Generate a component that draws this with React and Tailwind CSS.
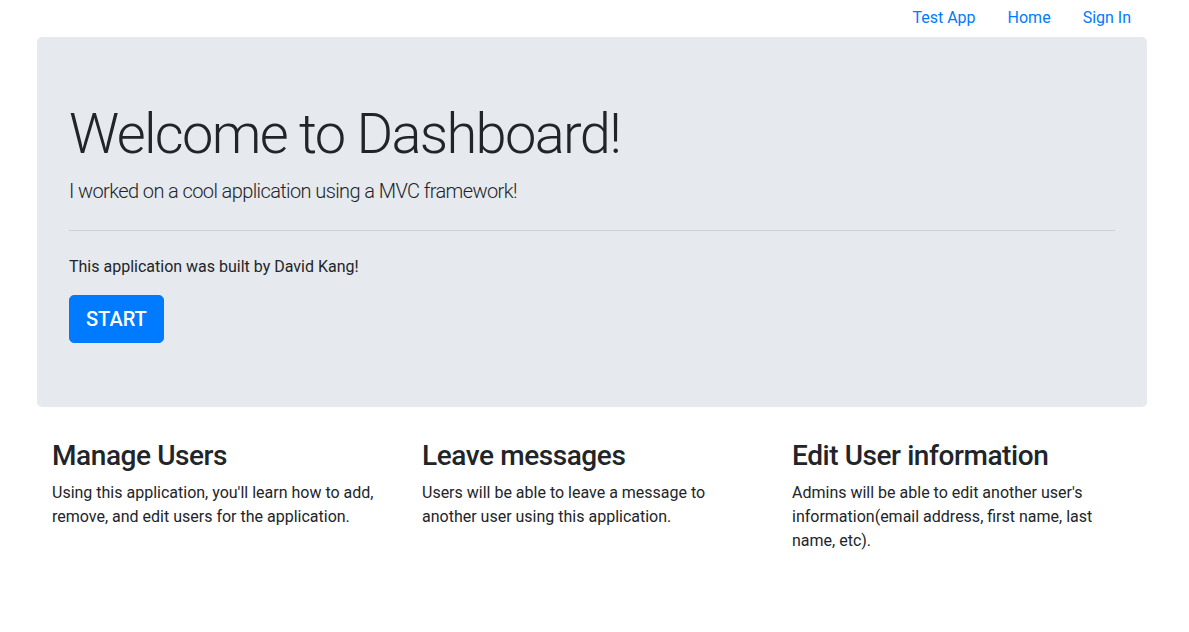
export default function App() {
  const features = [
    {
      title: "Manage Users",
      body: "Using this application, you'll learn how to add, remove, and edit users for the application.",
    },
    {
      title: "Leave messages",
      body: "Users will be able to leave a message to another user using this application.",
    },
    {
      title: "Edit User information",
      body: "Admins will be able to edit another user's information(email address, first name, last name, etc).",
    },
  ];

  return (
    <div className="min-h-screen bg-white text-[#212529] font-['Roboto','Liberation_Sans',sans-serif] text-base leading-6">
      {/* ── Nav ── */}
      <nav className="w-[1110px] ml-[37px] h-[37px] pt-[6px] flex justify-end">
        {["Test App", "Home", "Sign In"].map((l) => (
          <a key={l} href="#" className="px-4 text-[#007bff] leading-6">
            {l}
          </a>
        ))}
      </nav>

      {/* ── Jumbotron ── */}
      <div className="w-[1110px] ml-[37px] bg-[#e6e9ed] rounded-[5px] px-8 py-16 mb-8">
        <h1 className="text-[56px] font-light leading-[1.2] mb-2 tracking-[-0.03em]">
          Welcome to Dashboard!
        </h1>
        <p className="text-xl font-light leading-[30px] tracking-[-0.03em]">
          I worked on a cool application using a MVC framework!
        </p>
        <hr className="my-6 border-0 border-t border-black/10" />
        <p className="mb-4">This application was built by David Kang!</p>
        <button className="bg-[#007bff] border border-[#007bff] text-white text-xl font-medium leading-[30px] px-4 py-2 rounded-[5px]">
          START
        </button>
      </div>

      {/* ── Features ── */}
      <div className="w-[1110px] ml-[37px] grid grid-cols-3">
        {features.map((f) => (
          <div key={f.title} className="px-[15px]">
            <h3 className="text-[28px] font-medium leading-[1.2] mb-2 tracking-[-0.015em]">
              {f.title}
            </h3>
            <p className="mb-4">{f.body}</p>
          </div>
        ))}
      </div>
    </div>
  );
}
